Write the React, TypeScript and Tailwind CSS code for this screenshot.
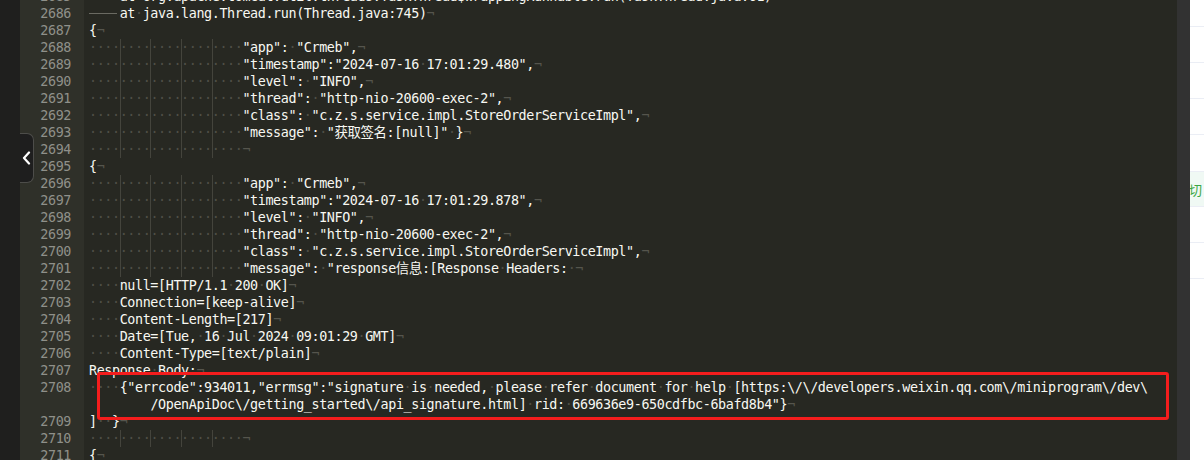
import React from "react";

type Line = { n?: number; indent?: number; text: string; tab?: boolean; eol?: boolean; wrap?: boolean };

const jsonBlock = (ts: string, msg: string): Line[] => [
  { n: 0, indent: 20, text: '"app": "Crmeb",' },
  { n: 0, indent: 20, text: `"timestamp":"2024-07-16 ${ts}",` },
  { n: 0, indent: 20, text: '"level": "INFO",' },
  { n: 0, indent: 20, text: '"thread": "http-nio-20600-exec-2",' },
  { n: 0, indent: 20, text: '"class": "c.z.s.service.impl.StoreOrderServiceImpl",' },
  { n: 0, indent: 20, text: `"message": "${msg}` },
];

const raw: Line[] = [
  { n: 0, tab: true, text: "at org.apache.tomcat.util.threads.TaskThread$WrappingRunnable.run(TaskThread.java:61)" },
  { n: 0, tab: true, text: "at java.lang.Thread.run(Thread.java:745)" },
  { n: 0, text: "{" },
  ...jsonBlock("17:01:29.480", '获取签名:[null]" }'),
  { n: 0, indent: 20, text: "" },
  { n: 0, text: "{" },
  ...jsonBlock("17:01:29.878", "response信息:[Response Headers: "),
  { n: 0, indent: 4, text: "null=[HTTP/1.1 200 OK]" },
  { n: 0, indent: 4, text: "Connection=[keep-alive]" },
  { n: 0, indent: 4, text: "Content-Length=[217]" },
  { n: 0, indent: 4, text: "Date=[Tue, 16 Jul 2024 09:01:29 GMT]" },
  { n: 0, indent: 4, text: "Content-Type=[text/plain]" },
  { n: 0, text: "Response Body:" },
  {
    n: 0,
    indent: 4,
    eol: false,
    text: '{"errcode":934011,"errmsg":"signature is needed, please refer document for help [https:\\/\\/developers.weixin.qq.com\\/miniprogram\\/dev\\',
  },
  { wrap: true, text: '/OpenApiDoc\\/getting_started\\/api_signature.html] rid: 669636e9-650cdfbc-6bafd8b4"}' },
  { n: 0, text: "]  }" },
  { n: 0, indent: 20, text: "" },
  { n: 0, text: "{" },
];

let num = 2685;
const lines = raw.map((l) => (l.wrap ? l : { ...l, n: num++ }));

function Spaced({ text }: { text: string }) {
  const parts = text.split(/( )/);
  return (
    <>
      {parts.map((p, i) =>
        p === " " ? (
          <span key={i} className="text-[#4f4f47]">
            ·
          </span>
        ) : (
          <span key={i}>{p}</span>
        )
      )}
    </>
  );
}

function Row({ line }: { line: Line }) {
  const indent = line.indent ?? 0;
  return (
    <div className="flex h-[17px] leading-[17px]">
      <div className="w-[64px] shrink-0 bg-[#2f3029] pr-[13px] text-right text-[#8f908a]">{line.n ?? ""}</div>
      <div className="flex whitespace-pre pl-[5px]">
        {line.wrap && <span className="w-[61.4px] shrink-0" />}
        {line.tab && (
          <span className="flex w-[30.7px] shrink-0 items-center pr-[3px]">
            <span className="h-px w-full bg-[#6a6a62]" />
          </span>
        )}
        {Array.from({ length: indent }).map((_, i) => (
          <span
            key={i}
            className={
              i > 0 && i % 4 === 0
                ? "w-[7.68px] shrink-0 text-center text-[#4f4f47] shadow-[inset_1px_0_0_#44443c]"
                : "w-[7.68px] shrink-0 text-center text-[#4f4f47]"
            }
          >
            ·
          </span>
        ))}
        <span className="text-[#f8f8f2]">
          <Spaced text={line.text} />
          {line.eol !== false && <span className="text-[#55554d]">¬</span>}
        </span>
      </div>
    </div>
  );
}

export default function App() {
  return (
    <div className="relative flex h-[460px] w-[1204px] overflow-hidden bg-[#272822] font-['DejaVu_Sans_Mono','Noto_Sans_CJK_SC',monospace] text-[13.4px] tracking-[-0.39px]">
      <div className="w-[20px] shrink-0 bg-[#1f1f1e]" />
      <div className="relative flex-1 overflow-hidden">
        <div className="flex h-full flex-col">
          <div className="-mt-[12.5px] flex flex-col">
            {lines.map((l, i) => (
              <Row key={i} line={l} />
            ))}
          </div>
          <div className="w-[64px] flex-1 bg-[#2f3029]" />
        </div>
        {/* highlight around the response body */}
        <div className="absolute left-[77px] top-[372px] h-[48px] w-[1072px] rounded-[3px] border-[3px] border-[#f41d1d]" />
      </div>
      <div className="w-[13px] shrink-0 bg-[#323232]" />
      <div className="flex w-[14px] shrink-0 flex-col bg-white font-['Noto_Sans_CJK_SC',sans-serif] tracking-normal">
        <div className="h-[27px] border-b border-[#ebeef5]" />
        <div className="h-[36px] border-b border-[#ebeef5]" />
        <div className="h-[36px] border-b border-[#ebeef5]" />
        <div className="h-[36px] border-b border-[#ebeef5]" />
        <div className="h-[37px] border-b border-[#ebeef5]" />
        <div className="flex h-[35px] items-center overflow-hidden border-b border-[#ebeef5] bg-[#f0f9f4] text-[13px] leading-none text-[#3aa745]">
          <span className="-ml-[1px]">切</span>
        </div>
        <div className="h-[36px] border-b border-[#ebeef5]" />
        <div className="h-[36px] border-b border-[#ebeef5]" />
      </div>
      {/* collapse handle */}
      <div className="absolute left-[20px] top-[133px] flex h-[50px] w-[14px] items-center justify-center rounded-r-[7px] border border-l-0 border-[#4d4d4a] bg-[#1e1e1e]">
        <svg width="9" height="14" viewBox="0 0 9 14" fill="none">
          <path d="M7 1.5L2 7l5 5.5" stroke="#fff" strokeWidth="2.2" strokeLinecap="round" strokeLinejoin="round" />
        </svg>
      </div>
    </div>
  );
}
